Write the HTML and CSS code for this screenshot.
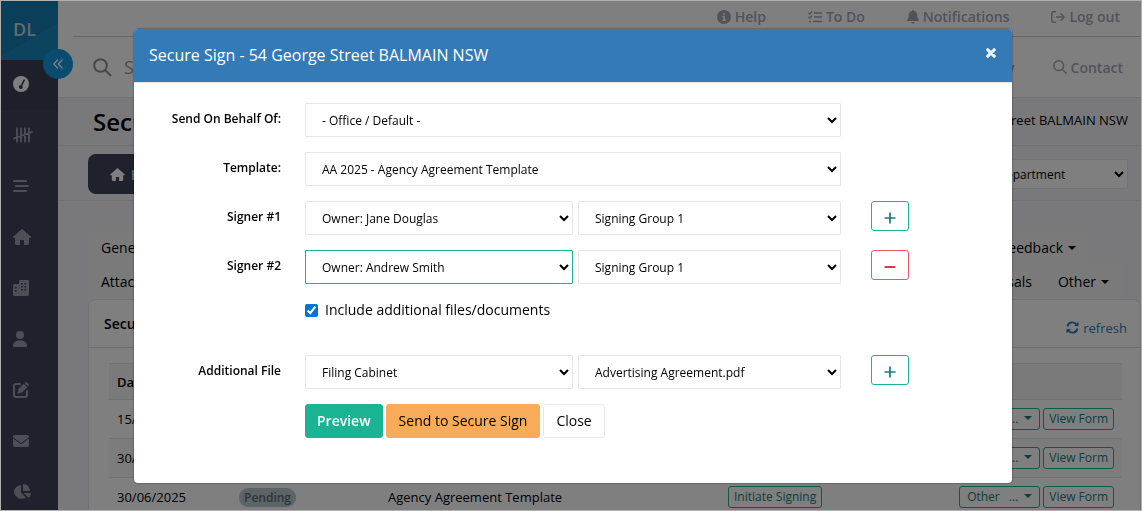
FILE: index.html
```html
<!DOCTYPE html>
<html lang="en">
<head>
<meta charset="utf-8">
<title>Secure Sign</title>
<link rel="stylesheet" href="styles.css">
</head>
<body>
<div class="app">
  <aside class="sidebar">
    <div class="logo">DL</div>
    <nav class="side-nav">
      <a class="side-link active" href="#" aria-label="Dashboard"><svg width="16" height="16" viewBox="0 0 16 16"><circle cx="8" cy="8" r="8" fill="currentColor"/><path d="M11.500 3.500 8.600 9.400" stroke="#3e4359" stroke-width="1.600"/><circle cx="7.800" cy="11" r="2" fill="#3e4359"/></svg></a>
      <a class="side-link" href="#" aria-label="Tally"><svg width="20" height="16" viewBox="0 0 20 16" fill="none" stroke="currentColor" stroke-width="1.800" stroke-linecap="round"><path d="M4 1.500v13M8 1.500v13M12 1.500v13M16 1.500v13M1 11.500 19 5"/></svg></a>
      <a class="side-link" href="#" aria-label="List"><svg width="16" height="14" viewBox="0 0 16 14" fill="none" stroke="currentColor" stroke-width="1.900" stroke-linecap="round"><path d="M1 2h12M3 7h12M1 12h12"/></svg></a>
      <a class="side-link" href="#" aria-label="Home"><svg width="18" height="16" viewBox="0 0 18 16" fill="currentColor"><path d="M9 0 .3 7.600c-.6.6-.2 1.400.6 1.400H2v5.500c0 .8.700 1.500 1.500 1.500H7v-5h4v5h3.500c.8 0 1.500-.7 1.500-1.500V9h1.100c.8 0 1.200-.8.6-1.400z"/></svg></a>
      <a class="side-link" href="#" aria-label="Buildings"><svg width="16" height="16" viewBox="0 0 16 16"><path fill="currentColor" d="M1.500 4H6V1.500C6 .7 6.700 0 7.500 0h7c.8 0 1.500.7 1.500 1.500v13c0 .8-.7 1.500-1.500 1.500h-13C.7 16 0 15.300 0 14.500v-9C0 4.700.7 4 1.500 4z"/><path fill="#3e4359" d="M2 7h1.600v1.500H2zM2 10h1.600v1.500H2zM8 3h1.600v1.500H8zM11.500 3h1.600v1.500h-1.600zM8 6h1.600v1.500H8zM11.500 6h1.600v1.500h-1.600zM8 9h1.600v1.500H8zM11.500 9h1.600v1.500h-1.600z"/></svg></a>
      <a class="side-link" href="#" aria-label="People"><svg width="14" height="16" viewBox="0 0 14 16" fill="currentColor"><circle cx="7" cy="4" r="4"/><path d="M5.500 9.500h3c3 0 5.500 2.400 5.500 5.400 0 .6-.5 1.100-1.100 1.100H1.100C.5 16 0 15.500 0 14.900c0-3 2.500-5.400 5.500-5.400z"/></svg></a>
      <a class="side-link" href="#" aria-label="Edit"><svg width="16" height="16" viewBox="0 0 16 16"><path d="M7 2H3a2 2 0 0 0-2 2v9a2 2 0 0 0 2 2h9a2 2 0 0 0 2-2V9" fill="none" stroke="currentColor" stroke-width="2" stroke-linecap="round"/><path fill="currentColor" d="M10.700 1.700 5.500 6.900 4.300 11.600 9 10.500l5.300-5.300zM11.600.9l1-.6c.4-.3 1-.3 1.400.1l1.600 1.600c.4.4.4 1 .1 1.400l-.6 1z"/></svg></a>
      <a class="side-link" href="#" aria-label="Mail"><svg width="16" height="12" viewBox="0 0 16 12" fill="currentColor"><path d="M1.500 0h13a1.500 1.500 0 0 1 .9 2.700L8.600 7.800a1 1 0 0 1-1.200 0L.6 2.700A1.500 1.500 0 0 1 1.500 0zM0 3.500l6.800 5.100a2 2 0 0 0 2.400 0L16 3.500V10a2 2 0 0 1-2 2H2a2 2 0 0 1-2-2z"/></svg></a>
      <a class="side-link" href="#" aria-label="Reports"><svg width="18" height="16" viewBox="0 0 18 16" fill="currentColor"><path d="M10 0a7 7 0 0 1 7 7h-7zM8 1v7.500l5 5.300A8 7.500 0 0 1 1 8.500 7.500 7.500 0 0 1 8 1zM10.500 9H18a8 8 0 0 1-2.400 5z"/></svg></a>
    </nav>
    <button class="collapse" aria-label="Collapse menu"><svg width="10" height="10" viewBox="0 0 10 10" fill="none" stroke="currentColor" stroke-width="1.300"><path d="M5 .5.800 5 5 9.500M9.500.5 5.300 5l4.200 4.500"/></svg></button>
  </aside>

  <main class="main">
    <header class="topbar">
      <a class="top-link help" href="#"><svg width="14" height="14" viewBox="0 0 14 14"><circle cx="7" cy="7" r="7" fill="currentColor"/><path d="M7 3v2M5.500 6.500H7.200V10M5.300 10.300h3.500" stroke="#fff" stroke-width="1.500" fill="none"/></svg>Help</a>
      <a class="top-link todo" href="#"><svg width="14" height="12" viewBox="0 0 14 12" fill="none" stroke="currentColor" stroke-width="1.400"><path d="M.5 1.800 1.700 3 4 .5M.5 5.800 1.700 7 4 4.500M6 2h8M6 6h8M5 10.500h9M1 10.500h2"/></svg>To Do</a>
      <a class="top-link notes" href="#"><svg width="12" height="14" viewBox="0 0 12 14" fill="currentColor"><path d="M6 0c.6 0 1 .4 1 1 2 .5 3.300 2.100 3.300 4.200 0 2.400.5 3.600 1.500 4.600.4.500.1 1.200-.6 1.200H.8c-.7 0-1-.7-.6-1.200 1-1 1.500-2.200 1.500-4.600C1.700 3.100 3 1.500 5 1c0-.6.4-1 1-1zM4.200 12h3.600a1.800 1.800 0 0 1-3.600 0z"/></svg>Notifications</a>
      <a class="top-link logout" href="#"><svg width="14" height="12" viewBox="0 0 14 12" fill="none" stroke="currentColor" stroke-width="1.500"><path d="M5 .8H2.500C1.500.8.800 1.500.8 2.500v7c0 1 .7 1.700 1.700 1.700H5M5 6h8M9.500 2.300 13.200 6 9.500 9.700"/></svg>Log out</a>
    </header>
    <div class="searchbar">
      <svg width="19" height="19" viewBox="0 0 19 19" fill="none" stroke="currentColor" stroke-width="2"><circle cx="7.500" cy="7.500" r="6.300"/><path d="m12 12 6 6"/></svg>
      <input class="search" type="text" placeholder="Search" aria-label="Search">
      <a class="top-link" href="#">Property</a>
      <a class="top-link contact" href="#"><svg width="14" height="14" viewBox="0 0 14 14" fill="none" stroke="currentColor" stroke-width="1.500"><circle cx="5.700" cy="5.700" r="4.900"/><path d="m9.200 9.200 4.300 4.300"/></svg>Contact</a>
    </div>
    <div class="titlebar">
      <h1>Secure</h1>
      <span>54 George Street BALMAIN NSW</span>
    </div>
    <div class="actionbar">
      <button class="home"><svg width="15" height="13" viewBox="0 0 18 16" fill="currentColor"><path d="M9 0 .3 7.600c-.6.6-.2 1.400.6 1.400H2v5.500c0 .8.700 1.500 1.500 1.500H7v-5h4v5h3.500c.8 0 1.500-.7 1.500-1.500V9h1.100c.8 0 1.200-.8.6-1.400z"/></svg>Home</button>
      <select class="control dept" aria-label="Department"><option>Select Department</option></select>
    </div>
    <div class="content">
      <div class="tabs">
        <div class="tab-row"><a class="tab" href="#">General</a><a class="tab end" href="#">Feedback<i class="caret"></i></a></div>
        <div class="tab-row last"><a class="tab" href="#">Attachments</a><a class="tab end" href="#">Appraisals</a><a class="tab" href="#">Other<i class="caret"></i></a></div>
      </div>
      <section class="card">
        <div class="card-head"><h2>Secure Sign</h2><a class="refresh" href="#"><svg width="13" height="13" viewBox="0 0 13 13" fill="none" stroke="currentColor" stroke-width="1.900"><path d="M1.500 5.500A5 5 0 0 1 10.500 3.500M11.500 7.500A5 5 0 0 1 2.500 9.500"/><path d="M12.500.5v4.500H8zM.5 12.500V8H5z" fill="currentColor" stroke="none"/></svg>refresh</a></div>
        <div class="card-body">
          <table class="grid">
            <thead><tr><th class="c-date">Date</th><th class="c-status"></th><th class="c-name"></th><th class="c-sign"></th><th></th></tr></thead>
            <tbody>
              <tr><td>15/07/2025</td><td></td><td></td><td></td><td class="actions"><button class="mini other">Other <span>...</span><i class="caret"></i></button><button class="mini">View Form</button></td></tr>
              <tr><td>30/06/2025</td><td></td><td></td><td></td><td class="actions"><button class="mini other">Other <span>...</span><i class="caret"></i></button><button class="mini">View Form</button></td></tr>
              <tr><td>30/06/2025</td><td><span class="badge">Pending</span></td><td>Agency Agreement Template</td><td><button class="mini">Initiate Signing</button></td><td class="actions"><button class="mini other">Other <span>...</span><i class="caret"></i></button><button class="mini">View Form</button></td></tr>
            </tbody>
          </table>
        </div>
      </section>
    </div>
  </main>
</div>

<div class="backdrop">
  <div class="modal" role="dialog" aria-labelledby="modal-title">
    <div class="modal-head">
      <h2 id="modal-title">Secure Sign - 54 George Street BALMAIN NSW</h2>
      <button class="close-x" aria-label="Close dialog"><svg width="10" height="10" viewBox="0 0 10 10" stroke="currentColor" stroke-width="3.200" stroke-linecap="round"><path d="m1.800 1.800 6.400 6.400M8.200 1.800 1.800 8.200"/></svg></button>
    </div>
    <form class="modal-body">
      <div class="row">
        <label for="behalf">Send On Behalf Of:</label>
        <div class="fields"><select class="control" id="behalf"><option>- Office / Default -</option></select></div>
      </div>
      <div class="row">
        <label for="template">Template:</label>
        <div class="fields"><select class="control" id="template"><option>AA 2025 - Agency Agreement Template</option></select></div>
      </div>
      <div class="row">
        <label for="signer1">Signer #1</label>
        <div class="fields pair"><select class="control" id="signer1"><option>Owner: Jane Douglas</option></select><select class="control" aria-label="Signer 1 group"><option>Signing Group 1</option></select></div>
        <button type="button" class="icon-btn add" aria-label="Add signer"><svg width="12" height="12" viewBox="0 0 12 12" stroke="currentColor" stroke-width="1.700"><path d="M6 .5v11M.5 6h11"/></svg></button>
      </div>
      <div class="row">
        <label for="signer2">Signer #2</label>
        <div class="fields pair"><select class="control focused" id="signer2"><option>Owner: Andrew Smith</option></select><select class="control" aria-label="Signer 2 group"><option>Signing Group 1</option></select></div>
        <button type="button" class="icon-btn remove" aria-label="Remove signer"><svg width="12" height="12" viewBox="0 0 12 12" stroke="currentColor" stroke-width="2"><path d="M.5 6h11"/></svg></button>
      </div>
      <div class="row check-row">
        <label class="check" for="include"><input type="checkbox" id="include" checked>Include additional files/documents</label>
      </div>
      <div class="row">
        <label for="file">Additional File</label>
        <div class="fields pair"><select class="control" id="file"><option>Filing Cabinet</option></select><select class="control" aria-label="Document"><option>Advertising Agreement.pdf</option></select></div>
        <button type="button" class="icon-btn add" aria-label="Add file"><svg width="12" height="12" viewBox="0 0 12 12" stroke="currentColor" stroke-width="1.700"><path d="M6 .5v11M.5 6h11"/></svg></button>
      </div>
      <div class="row">
        <div class="buttons"><button type="button" class="btn primary">Preview</button><button type="button" class="btn warning">Send to Secure Sign</button><button type="button" class="btn">Close</button></div>
      </div>
    </form>
  </div>
</div>
</body>
</html>
```
FILE: styles.css
```css
* { box-sizing: border-box; }
html, body { height: 100%; margin: 0; }
body {
  font-family: "Open Sans", sans-serif;
  font-size: 14px;
  line-height: 20px;
  color: #000;
  border: 1px solid #b0b0b0;
  overflow: hidden;
}
a { color: inherit; text-decoration: none; }
button, select, input { font-family: inherit; }
h1, h2 { margin: 0; }

.app { display: flex; height: 100%; overflow: hidden; }

.sidebar { position: relative; flex: 0 0 57px; background: #3e4359; }
.logo {
  height: 59px;
  padding: 0 12px;
  background: linear-gradient(150deg, #147fb4 60%, #1989bf 60%);
  color: #c8d4dc;
  font-size: 18px;
  font-weight: 600;
  line-height: 56px;
}
.side-nav { display: flex; flex-direction: column; color: #9a9fad; }
.side-link { display: flex; align-items: center; height: 51px; padding: 0 0 3px 12px; }
.side-link.active { background: #3a3f54; color: #fff; }
.collapse {
  position: absolute;
  top: 48px;
  right: -15px;
  display: flex;
  align-items: center;
  justify-content: center;
  width: 30px;
  height: 30px;
  border: 0;
  border-radius: 50%;
  background: #1496e0;
  color: #fff;
}

.main { display: flex; flex: 1; flex-direction: column; min-width: 0; background: #f3f3f6; }
.main > * { flex-shrink: 0; }
.topbar {
  display: flex;
  justify-content: flex-end;
  padding: 5px 21px 10px 0;
  background: linear-gradient(#ccc, #ccc) right bottom / calc(100% - 15px) 1px no-repeat #fff;
}
.top-link { display: flex; align-items: center; gap: 4px; color: #a3a7b6; font-weight: 600; line-height: 21px; }
.help, .todo, .notes { margin-right: 42px; }
.searchbar {
  display: flex;
  align-items: center;
  gap: 12px;
  height: 61px;
  padding: 0 18px 0 35px;
  border-bottom: 1px solid #e2e3e6;
  background: #fff;
  color: #8e8e8e;
}
.search { flex: 1; min-width: 0; border: 0; background: none; padding: 0; font-size: 18px; }
.search::placeholder { color: #9a9a9a; }
.contact { margin-left: 26px; }
.titlebar {
  display: flex;
  align-items: center;
  justify-content: space-between;
  height: 48px;
  padding: 0 13px 0 35px;
  border-bottom: 1px solid #e2e3e6;
  font-size: 13px;
  line-height: 42px;
}
.titlebar h1 { font-size: 24px; font-weight: 600; }
.titlebar span { margin-bottom: 4px; }
.actionbar {
  display: flex;
  align-items: center;
  justify-content: space-between;
  height: 55px;
  padding: 2px 13px 0 30px;
  border-bottom: 1px solid #e2e3e6;
}
.home {
  display: flex;
  align-items: center;
  gap: 6px;
  height: 40px;
  padding: 0 22px;
  border: 0;
  border-radius: 8px;
  background: #3e4359;
  color: #fff;
  font-size: 14px;
}
.content { padding: 30px 0 0 30px; }
.tab-row { display: flex; height: 34px; padding-right: 52px; }
.tab-row.last { padding-right: 19px; }
.tab { display: flex; align-items: center; gap: 5px; padding: 0 13px; background: #f5f5f7; }
.tab.end { margin-left: auto; }
.caret { border: 4px solid transparent; border-top-color: currentColor; border-bottom: 0; }
.card { border: 1px solid #e2e3e6; border-radius: 8px 8px 0 0; background: #fff; }
.card-head {
  display: flex;
  align-items: center;
  justify-content: space-between;
  height: 48px;
  padding: 0 13px 0 15px;
  border-bottom: 1px solid #dcdde0;
}
.card-head h2 { font-size: 14px; font-weight: 600; }
.refresh { display: flex; align-items: center; gap: 4px; padding-top: 8px; color: #337ab7; font-size: 13px; }
.card-body { padding: 15px 18px 0 20px; }
.grid { width: 100%; table-layout: fixed; border-collapse: collapse; font-size: 13px; }
.grid th { height: 36px; padding: 0 8px; border-top: 1px solid #e4e4e4; text-align: left; font-weight: 600; background: #f5f5f6; }
.grid td { height: 39px; padding: 0 8px; border-top: 1px solid #e4e4e4; white-space: nowrap; }
.grid tr:nth-child(even) td { background: #f9f9f9; }
.c-date { width: 122px; }
.c-status { width: 149px; }
.c-name { width: 340px; }
.c-sign { width: 200px; }
.badge { padding: 1px 5px; border-radius: 9px; background: #b9c9d0; color: #5e6a70; font-size: 12px; font-weight: 600; }
.mini { height: 22px; padding: 0 5px; border: 1px solid #1ab394; border-radius: 3px; background: #fff; color: #1a7b7b; font-size: 12px; line-height: 18px; }
.actions { text-align: right; }
.mini.other { width: 81px; margin-right: 3px; }
.other span { margin: 0 6px; }
.other .caret { display: inline-block; vertical-align: 3px; }

.control {
  width: 100%;
  min-width: 0;
  height: 34px;
  padding: 0 12px;
  border: 1px solid #e5e6e7;
  border-radius: 1px;
  background-color: #fff;
  color: #000;
  font-size: 12px;
}
.control.focused { border-color: #1ab394; }
.control.dept { width: 184px; height: 30px; }

.backdrop {
  position: fixed;
  inset: 1px;
  padding: 28px 129px 0 133px;
  background: rgba(0, 0, 0, 0.5);
}
.modal { overflow: hidden; border-radius: 4px; background: #fff; box-shadow: 0 0 2px rgba(0, 0, 0, 0.6); }
.modal-head {
  display: flex;
  align-items: center;
  justify-content: space-between;
  height: 54px;
  padding: 0 16px 2px 15px;
  border-bottom: 1px solid #e5e5e5;
  background: #337ab7;
  color: #fff;
}
.modal-head h2 { font-size: 16px; font-weight: 400; }
.close-x { display: flex; padding: 0; margin-bottom: 4px; border: 0; background: none; color: #ebf2f8; }
.modal-body { display: flex; flex-direction: column; gap: 15px; padding: 20px 0 45px; }
.row { display: grid; grid-template-columns: 147px minmax(0, 1fr) 147px; column-gap: 24px; }
.row > label { font-size: 12px; font-weight: 600; line-height: 32px; text-align: right; }
.fields { display: grid; grid-column: 2; gap: 5px; }
.pair { grid-template-columns: 268fr 263fr; }
.icon-btn {
  display: flex;
  align-items: center;
  justify-content: center;
  width: 38px;
  height: 30px;
  margin-left: 6px;
  padding: 4px 0 0;
  border: 1px solid;
  border-radius: 3px;
  background: #fff;
}
.icon-btn.add { border-color: #1ab394; color: #1a7b7b; }
.icon-btn.remove { border-color: #ed5565; color: #cc3d50; }
.row > .check {
  display: flex;
  grid-column: 2;
  align-items: center;
  gap: 7px;
  font-size: 14px;
  font-weight: 400;
  line-height: 22px;
}
.check input { width: 13px; height: 13px; margin: 0; accent-color: #0075d7; }
.check-row { padding-bottom: 19px; }
.buttons { display: flex; grid-column: 2; gap: 3px; }
.btn { height: 34px; padding: 0 12px 2px; border: 1px solid #e7eaec; border-radius: 3px; background: #fff; color: #000; font-size: 14px; }
.btn.primary { padding: 0 11px 2px; border-color: #1ab394; background: #1ab394; color: #fff; font-weight: 600; }
.btn.warning { border-color: #f8ac59; background: #f8ac59; }
```
